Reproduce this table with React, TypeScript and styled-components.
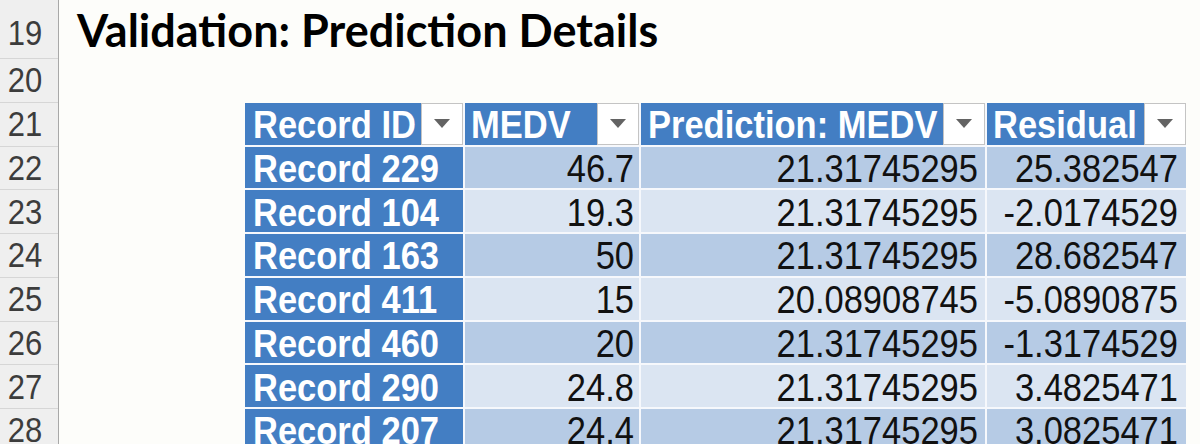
import React from "react";
import styled, { createGlobalStyle } from "styled-components";

const GlobalStyle = createGlobalStyle`
  html, body { margin: 0; padding: 0; background: #fdfdfa; overflow: hidden; }
  body { width: 1200px; height: 444px; }
`;

const ROW_H = 43.75;

const Sheet = styled.div`
  display: grid;
  grid-template-columns: 59px 1fr;
  width: 1200px;
  height: 444px;
  overflow: hidden;
  background: #fdfdfa;
`;

const RowHeaders = styled.div`
  display: flex;
  flex-direction: column;
  background: #efefef;
  border-right: 1px solid #a8a8a8;
`;

const RowNum = styled.div<{ $h: number }>`
  height: ${(p) => p.$h}px;
  flex: none;
  box-sizing: border-box;
  border-bottom: 1px solid #d6d6d6;
  display: flex;
  align-items: center;
  justify-content: center;
  padding-right: 8px;
  padding-top: ${(p) => (p.$h > 50 ? 10 : 2)}px;
  font-family: "Liberation Sans", Arial, sans-serif;
  font-size: 31px;
  color: #3c3c3c;
  span { display: inline-block; transform: scaleY(1.12); }
`;

const Content = styled.div`
  display: flex;
  flex-direction: column;
`;

const TitleRow = styled.div`
  height: 59px;
  flex: none;
  display: flex;
  align-items: center;
  padding-left: 18px;
  padding-top: 2px;
  box-sizing: border-box;
`;

const Title = styled.h1`
  margin: 0;
  font-family: Lato, "Open Sans", sans-serif;
  font-weight: 700;
  font-size: 45px;
  line-height: 1;
  color: #000;
`;

const Spacer = styled.div`
  height: ${ROW_H}px;
  flex: none;
`;

const Table = styled.div`
  margin-left: 186px;
  display: grid;
  grid-template-columns: 218px 174px 344px 199px;
  grid-auto-rows: ${ROW_H - 2}px;
  column-gap: 2px;
  row-gap: 2px;
  width: 941px;
  background: #f6f8fc;
  font-family: "Liberation Sans", Arial, sans-serif;
`;

const HeadCell = styled.div`
  display: flex;
  align-items: stretch;
  background: #437ec3;
  overflow: hidden;
`;

const HeadLabel = styled.div<{ $pl: number }>`
  flex: 1;
  min-width: 0;
  overflow: hidden;
  white-space: nowrap;
  display: flex;
  align-items: center;
  padding-left: ${(p) => p.$pl}px;
  padding-top: 3px;
  color: #fff;
  font-weight: 700;
  font-size: 34.5px;
  span { display: inline-block; transform: scaleY(1.1); }
`;

const DropButton = styled.div`
  width: 42px;
  flex: none;
  box-sizing: border-box;
  background: #fff;
  border: 1px solid #c4c4c4;
  display: flex;
  align-items: center;
  justify-content: center;
`;

const IdCell = styled.div`
  background: #437ec3;
  color: #fff;
  font-weight: 700;
  font-size: 34.5px;
  display: flex;
  align-items: center;
  padding-left: 8px;
  padding-top: 4px;
  white-space: nowrap;
  overflow: hidden;
  span { display: inline-block; transform: scaleY(1.1); }
`;

const NumCell = styled.div<{ $dark: boolean; $pr: number }>`
  background: ${(p) => (p.$dark ? "#b6cbe5" : "#dbe5f2")};
  color: #111;
  font-size: 34.5px;
  display: flex;
  align-items: center;
  justify-content: flex-end;
  padding-right: ${(p) => p.$pr}px;
  padding-top: 4px;
  white-space: nowrap;
  overflow: hidden;
  span { display: inline-block; transform: scaleY(1.1); }
`;

const Arrow = () => (
  <svg width="16" height="9" viewBox="0 0 16 9">
    <path d="M0 0 H16 L8 9 Z" fill="#636363" />
  </svg>
);

const headers = [
  { label: "Record ID", pl: 8 },
  { label: "MEDV", pl: 6 },
  { label: "Prediction: MEDV", pl: 7 },
  { label: "Residual", pl: 6 },
];

const rows: [string, string, string, string][] = [
  ["Record 229", "46.7", "21.31745295", "25.382547"],
  ["Record 104", "19.3", "21.31745295", "-2.0174529"],
  ["Record 163", "50", "21.31745295", "28.682547"],
  ["Record 411", "15", "20.08908745", "-5.0890875"],
  ["Record 460", "20", "21.31745295", "-1.3174529"],
  ["Record 290", "24.8", "21.31745295", "3.4825471"],
  ["Record 207", "24.4", "21.31745295", "3.0825471"],
];

const rowNums = [19, 20, 21, 22, 23, 24, 25, 26, 27, 28];

export default function App() {
  return (
    <>
      <GlobalStyle />
      <Sheet>
        <RowHeaders>
          {rowNums.map((n, i) => (
            <RowNum key={n} $h={i === 0 ? 59 : ROW_H}>
              <span>{n}</span>
            </RowNum>
          ))}
        </RowHeaders>
        <Content>
          <TitleRow>
            <Title>Validation: Prediction Details</Title>
          </TitleRow>
          <Spacer />
          <Table>
            {headers.map((h) => (
              <HeadCell key={h.label}>
                <HeadLabel $pl={h.pl}>
                  <span>{h.label}</span>
                </HeadLabel>
                <DropButton>
                  <Arrow />
                </DropButton>
              </HeadCell>
            ))}
            {rows.map((r, i) => (
              <React.Fragment key={r[0]}>
                <IdCell>
                  <span>{r[0]}</span>
                </IdCell>
                <NumCell $dark={i % 2 === 0} $pr={5}>
                  <span>{r[1]}</span>
                </NumCell>
                <NumCell $dark={i % 2 === 0} $pr={7}>
                  <span>{r[2]}</span>
                </NumCell>
                <NumCell $dark={i % 2 === 0} $pr={8}>
                  <span>{r[3]}</span>
                </NumCell>
              </React.Fragment>
            ))}
          </Table>
        </Content>
      </Sheet>
    </>
  );
}
